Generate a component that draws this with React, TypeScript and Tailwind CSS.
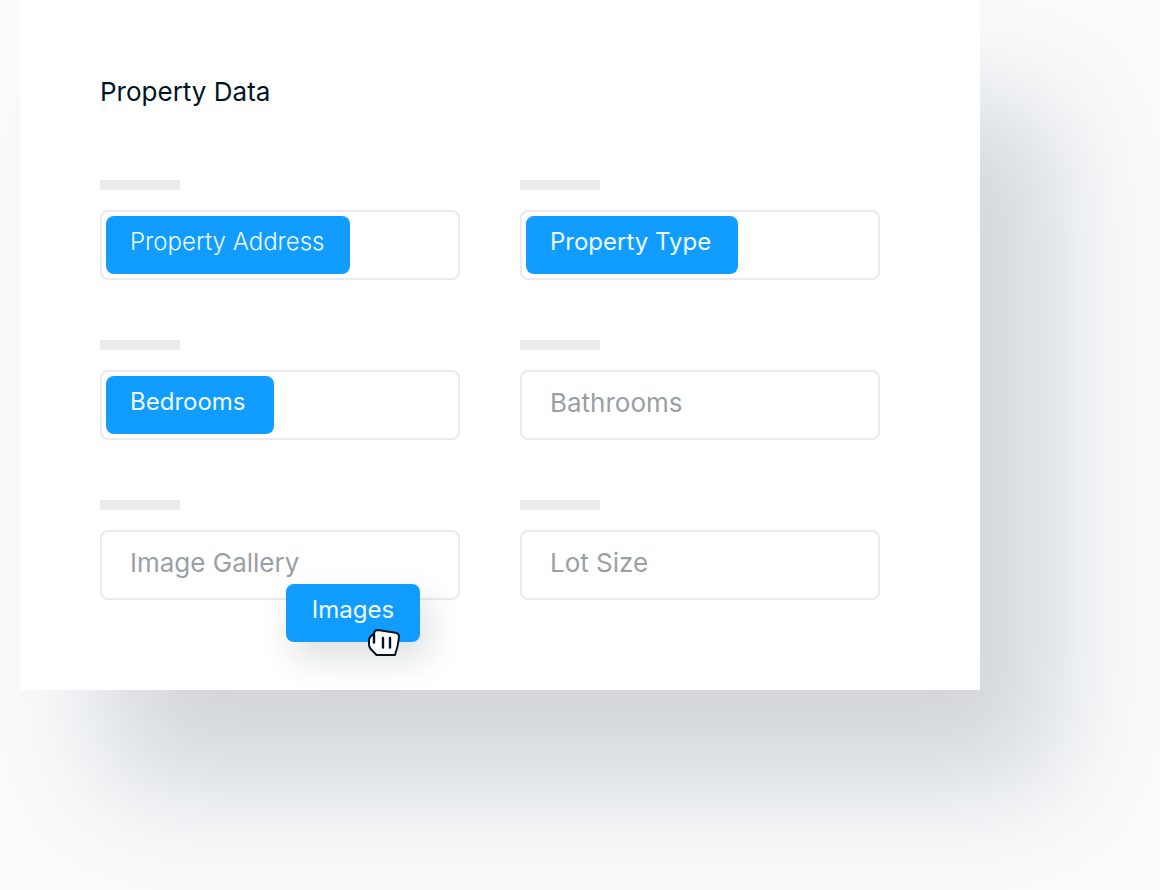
import React from 'react';

interface Field {
  id: string;
  label: string;
  chip?: string;
  chipStyle?: string;
  dragging?: string;
}

const fields: Field[] = [
  { id: 'address', label: 'Property Address', chip: 'Property Address', chipStyle: 'w-[244px] font-light' },
  { id: 'type', label: 'Property Type', chip: 'Property Type', chipStyle: 'w-[212px]' },
  { id: 'bedrooms', label: 'Bedrooms', chip: 'Bedrooms', chipStyle: 'w-[168px]' },
  { id: 'bathrooms', label: 'Bathrooms' },
  { id: 'gallery', label: 'Image Gallery', dragging: 'Images' },
  { id: 'lot', label: 'Lot Size' },
];

const GrabCursor = () => (
  <svg className="absolute left-20 top-[42px]" width="36" height="32" viewBox="0 0 36 32" fill="none" aria-hidden="true">
    <path
      d="M8 8C8 5.500 9.500 4 12 4L29.500 6.700C32 7.100 33.300 9 32.900 11.500C32.500 17 31 23.500 29 29H10.500L4.500 22.800C3.500 21.500 3 20 3 18V14.500C3 12 5 9.500 8 8Z"
      fill="#fff"
      stroke="#001424"
      strokeWidth="2"
      strokeLinejoin="round"
    />
    <path d="M8 8V16.500M17 12V21.500M24 12V21.500" stroke="#001424" strokeWidth="2.400" strokeLinecap="round" />
  </svg>
);

const FieldBox: React.FC<{ field: Field }> = ({ field }) => (
  <div className="flex flex-col gap-5">
    <label htmlFor={field.id} aria-label={field.label} className="block h-2.5 w-20 bg-[#ebecee]" />
    <div className="relative h-[70px] rounded-lg border-2 border-[#ebebeb] bg-white">
      {field.chip ? (
        <div className="p-1">
          <button
            id={field.id}
            type="button"
            className={`block h-[58px] cursor-grab rounded-lg bg-[#119dff] pb-1.5 pl-6 text-left text-2xl text-[#f0faff] ${field.chipStyle}`}
          >
            {field.chip}
          </button>
        </div>
      ) : (
        <input
          id={field.id}
          type="text"
          placeholder={field.label}
          className="block h-full w-full rounded-lg bg-transparent px-7 pb-1.5 text-[26px] outline-none placeholder:text-[#999fa7]"
        />
      )}

      {/* Chip being dragged onto the field */}
      {field.dragging && (
        <div className="absolute left-[184px] top-[52px]">
          <button
            type="button"
            className="block h-[58px] w-[134px] cursor-grabbing rounded-lg bg-[#119dff] pb-1.5 text-center text-2xl text-[#f0faff] shadow-[8px_16px_36px_rgba(0,20,30,0.14)]"
          >
            {field.dragging}
          </button>
          <GrabCursor />
        </div>
      )}
    </div>
  </div>
);

export default function App() {
  return (
    <div className="min-h-screen overflow-hidden bg-[#f9fbfd] pl-5 pr-[180px] font-['Inter',sans-serif]">
      <main className="bg-white pb-[90px] pl-20 pr-[100px] pt-[74px] shadow-[80px_100px_110px_-6px_rgba(0,20,24,0.155)]">
        <h1 className="text-[26px] leading-9 text-[#001424]">Property Data</h1>
        <form className="mt-[70px] grid grid-cols-2 gap-[60px]">
          {fields.map((field) => (
            <FieldBox key={field.id} field={field} />
          ))}
        </form>
      </main>
    </div>
  );
}
